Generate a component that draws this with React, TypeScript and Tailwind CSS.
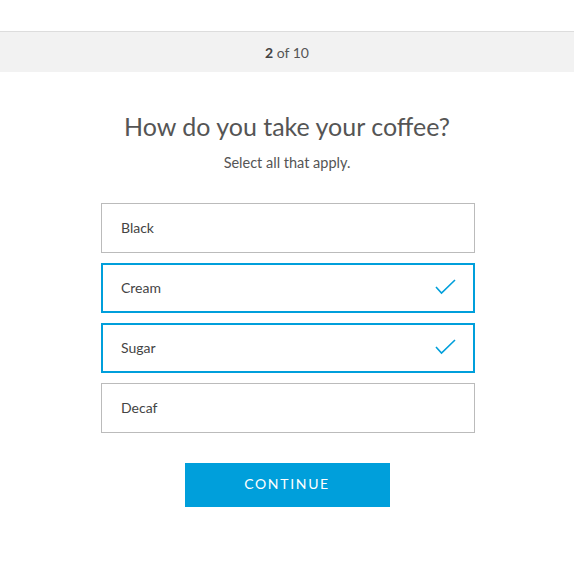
import { useState } from 'react';

const OPTIONS = ['Black', 'Cream', 'Sugar', 'Decaf'];

function Check() {
  return (
    <svg width="21" height="16" viewBox="0 0 21 16" fill="none" className="shrink-0">
      <path d="M1 8 L6.5 14 L20 1" stroke="#009fdb" strokeWidth="1.6" />
    </svg>
  );
}

export default function App() {
  const [picked, setPicked] = useState<string[]>(['Cream', 'Sugar']);

  const toggle = (name: string) =>
    setPicked((p) => (p.includes(name) ? p.filter((x) => x !== name) : [...p, name]));

  return (
    <div className="min-h-[568px] bg-white pt-[31px] font-['Lato','Open_Sans',sans-serif] text-[#444]">
      <div className="flex h-[41px] items-center justify-center border-t border-[#dddddd] bg-[#f2f2f2] text-[14px] text-[#555]">
        <span>
          <b className="font-bold text-[#444]">2</b> of 10
        </span>
      </div>

      <div className="flex flex-col items-center">
        <h1 className="mt-[38px] text-[25px] leading-[32px] text-[#555]">How do you take your coffee?</h1>
        <p className="mt-[11px] text-[14.5px] leading-[20px] text-[#555]">Select all that apply.</p>

        <div className="ml-[2px] mt-[30px] flex w-[374px] flex-col gap-[10px]">
          {OPTIONS.map((name) => {
            const on = picked.includes(name);
            return (
              <button
                key={name}
                onClick={() => toggle(name)}
                className={
                  on
                    ? 'flex h-[50px] items-center justify-between border-2 border-[#009fdb] pb-[2px] pl-[18px] pr-[17px] text-left text-[14px] text-[#444]'
                    : 'flex h-[50px] items-center justify-between border border-[#bbbbbb] pb-[2px] pl-[19px] pr-[18px] text-left text-[14px] text-[#444]'
                }
              >
                <span>{name}</span>
                {on && <Check />}
              </button>
            );
          })}
        </div>

        <button className="mt-[30px] h-[44px] w-[205px] bg-[#009fdb] pb-[4px] text-[14px] tracking-[0.12em] text-white">
          CONTINUE
        </button>
      </div>
    </div>
  );
}
